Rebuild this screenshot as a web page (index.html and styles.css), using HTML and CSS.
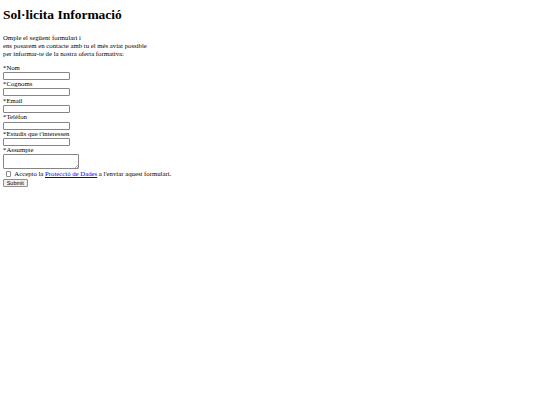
FILE: index.html
```html
<!DOCTYPE html>
<html lang="ca">
<head>
<meta charset="utf-8">
<title>Sol·licita Informació</title>
<link rel="stylesheet" href="styles.css">
</head>
<body class="page">
<h1 class="title">Sol·licita Informació</h1>
<p class="intro">Omple el següent formulari i<br>ens posarem en contacte amb tu el més aviat possible<br>per informar-te de la nostra oferta formativa:</p>
<form class="form">
  <label class="field"><span class="label">*Nom</span><input type="text" class="input"></label>
  <label class="field"><span class="label">*Cognoms</span><input type="text" class="input"></label>
  <label class="field"><span class="label">*Email</span><input type="text" class="input"></label>
  <label class="field"><span class="label">*Telèfon</span><input type="text" class="input"></label>
  <label class="field"><span class="label">*Estudis que t'interessen</span><input type="text" class="input"></label>
  <label class="field"><span class="label">*Assumpte</span><span class="area-wrap"><textarea class="area"></textarea></span></label>
  <div class="consent"><input type="checkbox" class="check"><span>Accepto la <a href="#" class="link">Protecció de Dades</a> a l'enviar aquest formulari.</span></div>
  <button type="submit" class="submit">Submit</button>
</form>
</body>
</html>
```
FILE: styles.css
```css
html, body {
  background: #fff;
}
.page {
  margin: 3px;
  font-family: "Liberation Serif", "Times New Roman", serif;
  font-size: 6.75px;
  line-height: 8px;
  color: #000;
}
.title {
  font-size: 13.5px;
  line-height: 15.5px;
  font-weight: bold;
  margin: 4px 0 11.5px;
}
.intro {
  margin: 0 0 5.5px;
}
.form {
  display: flex;
  flex-direction: column;
  align-items: flex-start;
}
.field {
  display: flex;
  flex-direction: column;
  align-items: flex-start;
}
.label {
  display: block;
  height: 8px;
}
.input {
  display: block;
  box-sizing: border-box;
  width: 67px;
  height: 8px;
  margin: 0.3px 0 0.3px;
  padding: 0;
  border: 1px solid #858585;
  border-radius: 1px;
  background: #fff;
  font-size: 5px;
}
.area-wrap {
  position: relative;
  display: block;
  margin-top: -0.5px;
}
.area {
  display: block;
  box-sizing: border-box;
  width: 76px;
  height: 15.5px;
  margin: 0;
  padding: 0;
  border: 1px solid #858585;
  border-radius: 1px;
  background: #fff;
  resize: none;
  font-size: 5px;
}
.area-wrap::after {
  content: "";
  position: absolute;
  right: 1.5px;
  bottom: 1.5px;
  width: 3px;
  height: 3px;
  background: linear-gradient(135deg, transparent 45%, #aaa 45%, #aaa 55%, transparent 55%, transparent 75%, #aaa 75%, #aaa 85%, transparent 85%);
}
.consent {
  display: flex;
  align-items: center;
  gap: 3px;
  margin-top: 1px;
  height: 7.5px;
}
.check {
  appearance: none;
  -webkit-appearance: none;
  box-sizing: border-box;
  width: 5.5px;
  height: 5.5px;
  margin: 0 0 0 2.8px;
  border: 0.7px solid #8a8a8a;
  border-radius: 1px;
  background: #fff;
}
.link {
  color: #0000ee;
  text-decoration: underline;
}
.submit {
  box-sizing: border-box;
  margin-top: 0.8px;
  width: 24.5px;
  height: 8px;
  padding: 0;
  font-family: "Liberation Sans", Arial, sans-serif;
  font-size: 5.5px;
  line-height: 6px;
  color: #000;
  background: #efefef;
  border: 0.8px solid #8f8f8f;
  border-radius: 1px;
}
```
